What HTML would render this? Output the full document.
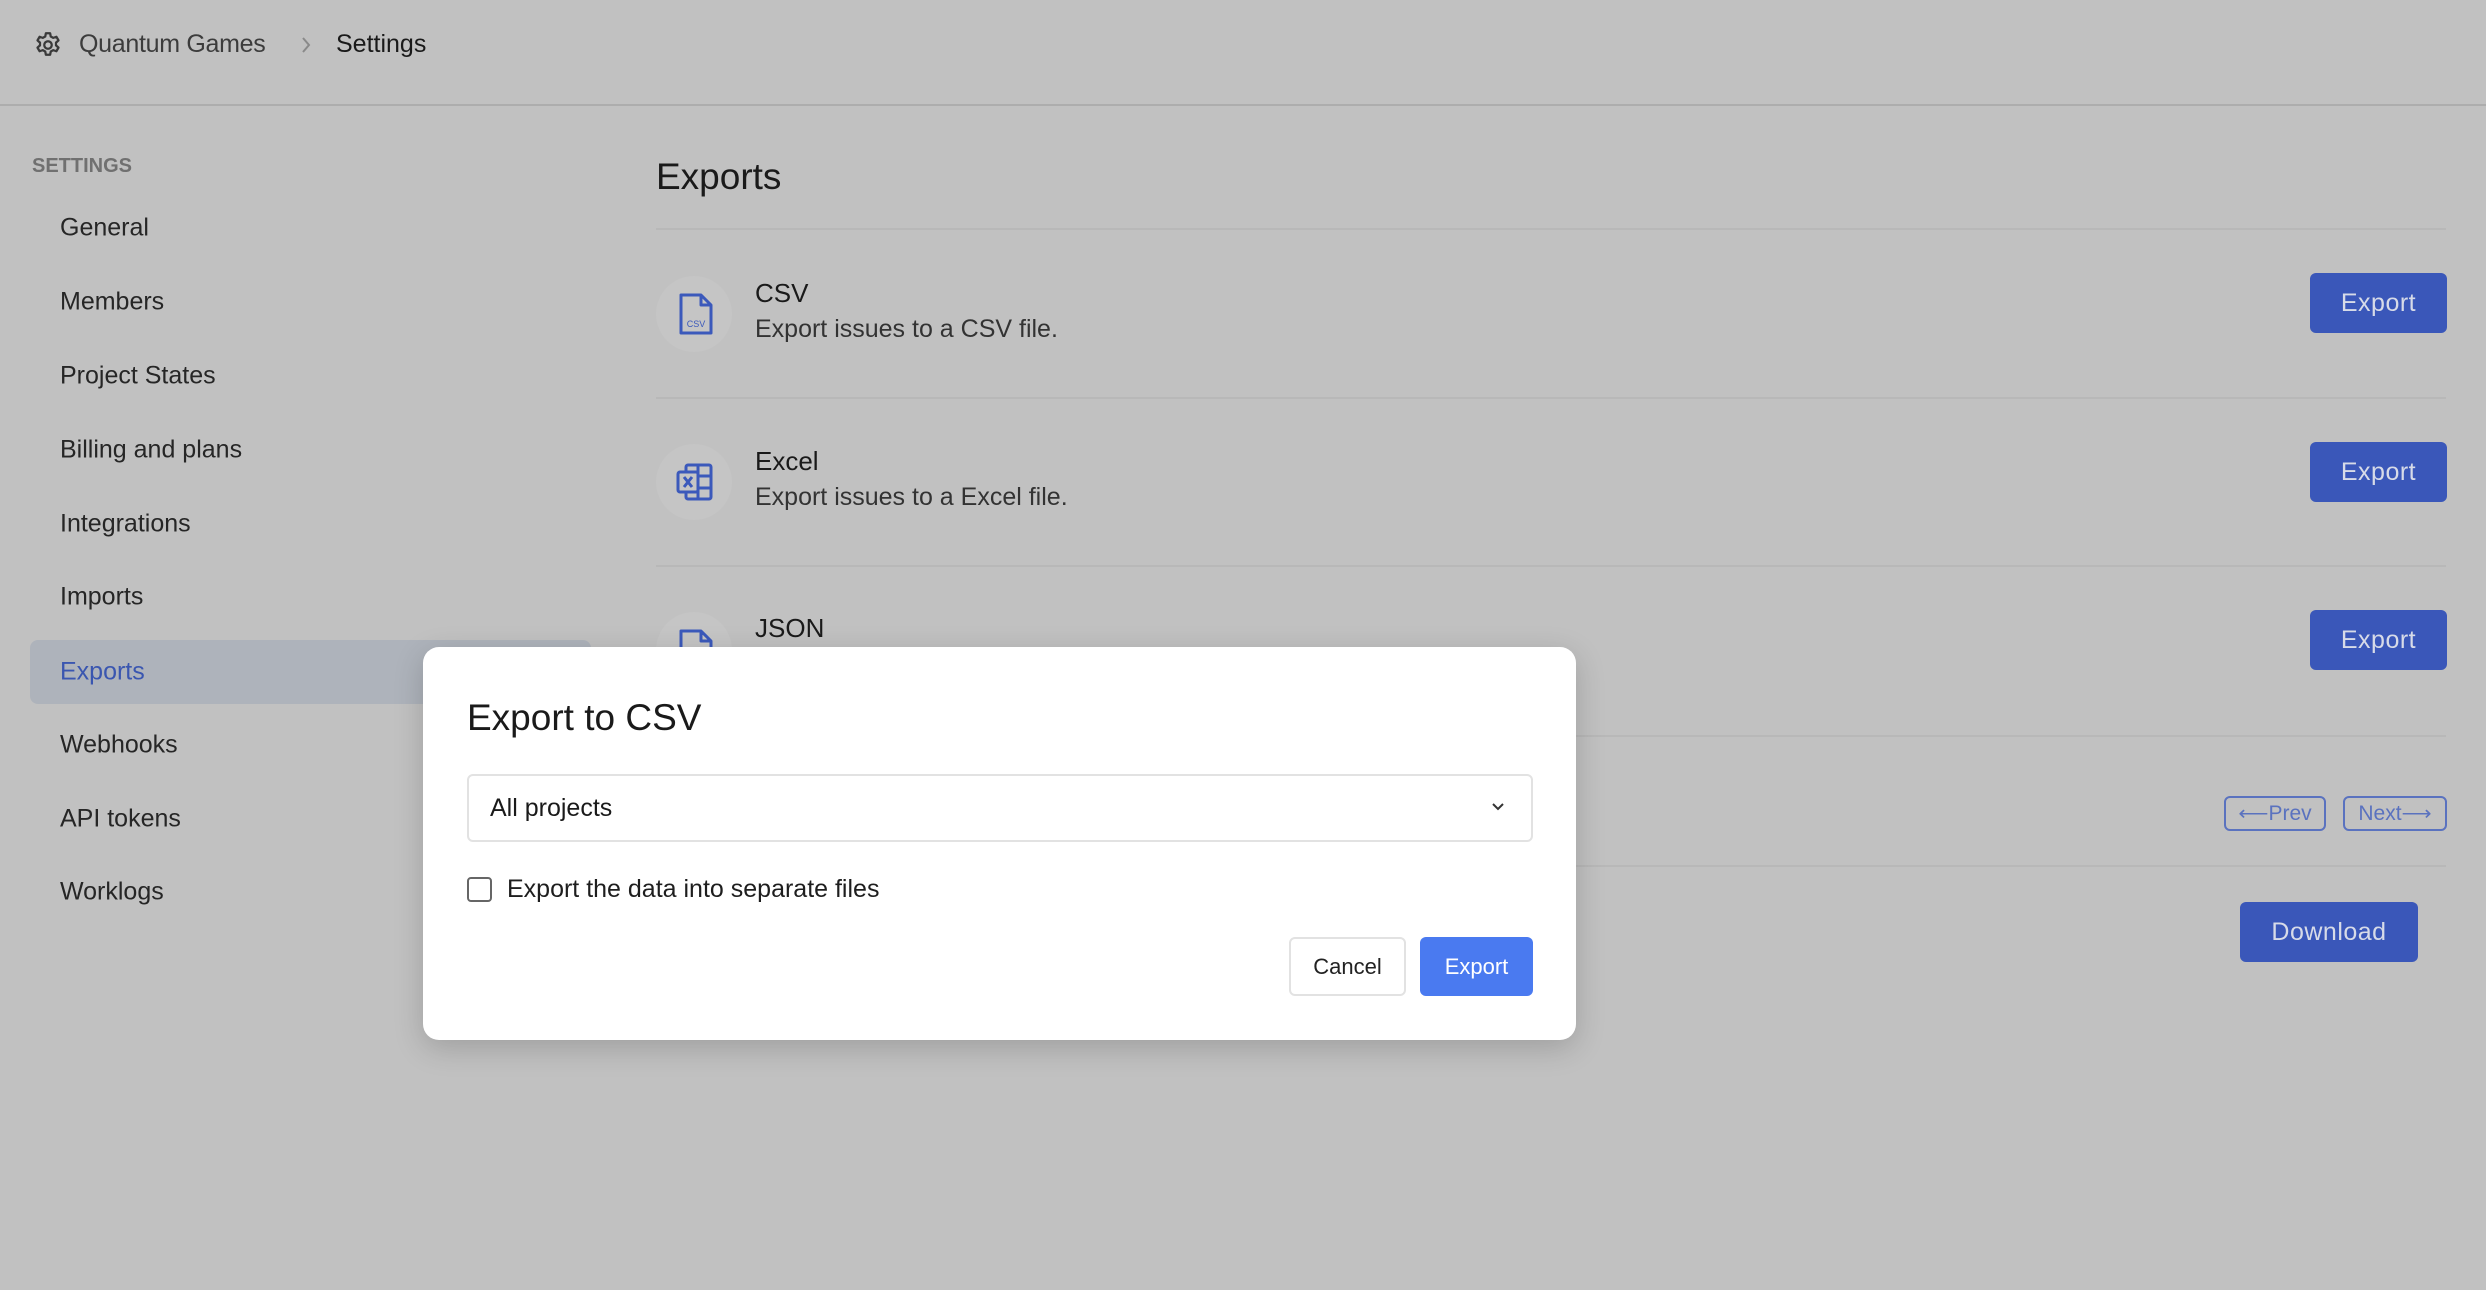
<!DOCTYPE html>
<html><head><meta charset="utf-8"><style>
*{box-sizing:border-box;margin:0;padding:0}
body{width:2486px;height:1290px;background:#c1c1c1;font-family:"Liberation Sans",sans-serif;color:#1e1e1e;position:relative;overflow:hidden}
.a{position:absolute;white-space:nowrap}
.line{position:absolute;height:2px;background:#b8b8b8}
.nav{position:absolute;left:60px;font-size:25px;color:#262626;transform:translateY(-50%)}
.btn{position:absolute;background:#3a57b9;color:#d7dbe8;font-size:25px;border-radius:6px;display:flex;align-items:center;justify-content:center;letter-spacing:0.5px}
.ic{position:absolute;width:76px;height:76px;border-radius:50%;background:#c5c5c5}
</style></head><body>
<svg class="a" style="left:33px;top:30px" width="30" height="30" viewBox="0 0 24 24" fill="none" stroke="#3a3a3a" stroke-width="1.8" stroke-linejoin="round"><path d="M10.3 2.6h3.4l.5 2.6 2 1.1 2.5-.9 1.7 2.9-2 1.8v2.2l2 1.8-1.7 2.9-2.5-.9-2 1.1-.5 2.6h-3.4l-.5-2.6-2-1.1-2.5.9-1.7-2.9 2-1.8v-2.2l-2-1.8 1.7-2.9 2.5.9 2-1.1z"/><circle cx="12" cy="12" r="3"/></svg>
<div class="a" style="left:79px;top:30px;font-size:25px;color:#3c3c3c;letter-spacing:-0.3px">Quantum Games</div>
<svg class="a" style="left:300px;top:36px" width="12" height="18" viewBox="0 0 12 18" fill="none" stroke="#8a8a8a" stroke-width="2"><path d="M3 2l6 7-6 7"/></svg>
<div class="a" style="left:336px;top:30px;font-size:25px;color:#1a1a1a">Settings</div>
<div class="line" style="left:0;top:104px;width:2486px;background:#adadad"></div>

<div class="a" style="left:32px;top:155px;font-size:20px;color:#707070;font-weight:bold">SETTINGS</div>
<div class="a" style="left:30px;top:640px;width:561px;height:64px;background:#aeb3bb;border-radius:8px"></div>
<div class="nav" style="top:228px">General</div>
<div class="nav" style="top:302px">Members</div>
<div class="nav" style="top:376px">Project States</div>
<div class="nav" style="top:450px">Billing and plans</div>
<div class="nav" style="top:524px">Integrations</div>
<div class="nav" style="top:597px">Imports</div>
<div class="nav" style="top:672px;color:#3a56b0">Exports</div>
<div class="nav" style="top:745px">Webhooks</div>
<div class="nav" style="top:819px">API tokens</div>
<div class="nav" style="top:892px">Worklogs</div>

<div class="a" style="left:656px;top:156px;font-size:37px;color:#1a1a1a">Exports</div>
<div class="line" style="left:656px;top:228px;width:1790px"></div>
<div class="line" style="left:656px;top:397px;width:1790px"></div>
<div class="line" style="left:656px;top:565px;width:1790px"></div>
<div class="line" style="left:656px;top:735px;width:1790px"></div>
<div class="line" style="left:656px;top:865px;width:1790px"></div>

<div class="ic" style="left:656px;top:276px"></div>
<svg class="a" style="left:678px;top:292px" width="36" height="44" viewBox="0 0 36 44" fill="none" stroke="#3b59bb" stroke-width="3" stroke-linejoin="round"><path d="M3 3h20l10 10v28H3z M23 3v10h10"/><text x="18" y="35" font-size="9" fill="#3b59bb" stroke="none" text-anchor="middle" font-family="Liberation Sans">CSV</text></svg>
<div class="a" style="left:755px;top:278px;font-size:26px;color:#1a1a1a">CSV</div>
<div class="a" style="left:755px;top:315px;font-size:25px;color:#333">Export issues to a CSV file.</div>

<div class="ic" style="left:656px;top:444px"></div>
<svg class="a" style="left:676px;top:462px" width="38" height="40" viewBox="0 0 38 40" fill="none" stroke="#3b59bb" stroke-width="3" stroke-linejoin="round"><rect x="10" y="3" width="25" height="34" rx="2"/><path d="M22 3v34M22 14h13M22 26h13"/><rect x="2" y="10" width="20" height="20" rx="2" fill="#c5c5c5"/><path d="M8 15l8 10M16 15l-8 10"/></svg>
<div class="a" style="left:755px;top:446px;font-size:26px;color:#1a1a1a">Excel</div>
<div class="a" style="left:755px;top:483px;font-size:25px;color:#333">Export issues to a Excel file.</div>

<div class="ic" style="left:656px;top:612px"></div>
<svg class="a" style="left:678px;top:628px" width="36" height="44" viewBox="0 0 36 44" fill="none" stroke="#3b59bb" stroke-width="3" stroke-linejoin="round"><path d="M3 3h20l10 10v28H3z M23 3v10h10"/></svg>
<div class="a" style="left:755px;top:613px;font-size:26px;color:#1a1a1a">JSON</div>

<div class="btn" style="left:2310px;top:273px;width:137px;height:60px">Export</div>
<div class="btn" style="left:2310px;top:442px;width:137px;height:60px">Export</div>
<div class="btn" style="left:2310px;top:610px;width:137px;height:60px">Export</div>
<div class="a" style="left:2224px;top:796px;width:102px;height:35px;border:2px solid #5a72bf;border-radius:6px;color:#5a72bf;font-size:21px;display:flex;align-items:center;justify-content:center">⟵Prev</div>
<div class="a" style="left:2343px;top:796px;width:104px;height:35px;border:2px solid #5a72bf;border-radius:6px;color:#5a72bf;font-size:21px;display:flex;align-items:center;justify-content:center">Next⟶</div>
<div class="btn" style="left:2240px;top:902px;width:178px;height:60px">Download</div>

<div class="a" style="left:423px;top:647px;width:1153px;height:393px;background:#fff;border-radius:16px;box-shadow:0 8px 30px rgba(0,0,0,0.18)"></div>
<div class="a" style="left:467px;top:697px;font-size:37px;color:#1a1a1a">Export to CSV</div>
<div class="a" style="left:467px;top:774px;width:1066px;height:68px;border:2px solid #e2e2e2;border-radius:6px"></div>
<div class="a" style="left:490px;top:794px;font-size:25px;color:#1a1a1a">All projects</div>
<svg class="a" style="left:1490px;top:801px" width="16" height="12" viewBox="0 0 16 12" fill="none" stroke="#333" stroke-width="2"><path d="M3 3l5 5 5-5"/></svg>
<div class="a" style="left:467px;top:877px;width:25px;height:25px;border:2px solid #666;border-radius:4px"></div>
<div class="a" style="left:507px;top:875px;font-size:25px;color:#1e1e1e">Export the data into separate files</div>
<div class="a" style="left:1289px;top:937px;width:117px;height:59px;border:2px solid #e2e2e2;border-radius:6px;font-size:22px;display:flex;align-items:center;justify-content:center;color:#222">Cancel</div>
<div class="a" style="left:1420px;top:937px;width:113px;height:59px;background:#4a7af0;border-radius:6px;font-size:22px;display:flex;align-items:center;justify-content:center;color:#fff">Export</div>
</body></html>
